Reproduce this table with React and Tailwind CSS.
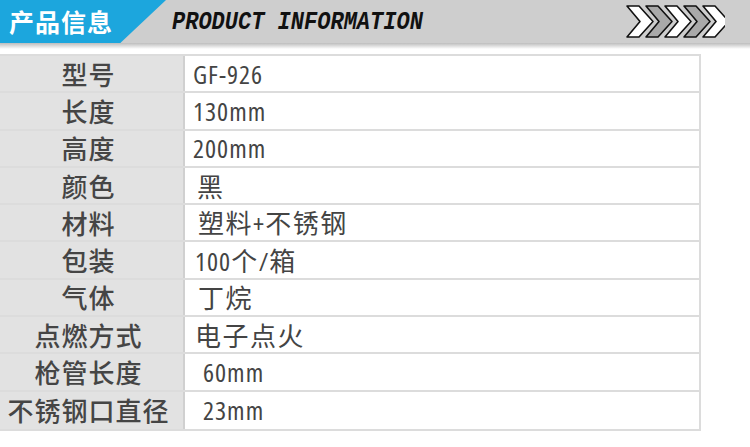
const ROWS = [
  { label: '型号', value: 'GF-926', pad: 'pl-[8px]' },
  { label: '长度', value: '130mm', pad: 'pl-[8px]' },
  { label: '高度', value: '200mm', pad: 'pl-[8px]' },
  { label: '颜色', value: '黑', pad: 'pl-[12px]' },
  { label: '材料', value: '塑料+不锈钢', pad: 'pl-[13px]' },
  { label: '包装', value: '100个/箱', pad: 'pl-[10px]' },
  { label: '气体', value: '丁烷', pad: 'pl-[13px]' },
  { label: '点燃方式', value: '电子点火', pad: 'pl-[10px]' },
  { label: '枪管长度', value: '60mm', pad: 'pl-[18px]' },
  { label: '不锈钢口直径', value: '23mm', pad: 'pl-[18px]' },
]

// latin runs use a condensed face, CJK runs keep the full width
function Value({ text }) {
  const parts = text.split(/([A-Za-z0-9+\-\/]+)/).filter(Boolean)
  return (
    <span>
      {parts.map((p, i) =>
        /[A-Za-z0-9+\-\/]/.test(p) ? (
          <span key={i} className="text-[26px] font-medium [font-stretch:75%] tracking-[1px]"
            style={{ fontFamily: '"Open Sans", "DejaVu Sans", sans-serif' }}>{p}</span>
        ) : (
          <span key={i} className="text-[26px] tracking-[1.5px]">{p}</span>
        )
      )}
    </span>
  )
}

// ── chevron strip in the header ───────────────────────────────────────────────
function Chevrons() {
  const fills = ['#ffffff', '#a9a9a9', '#ffffff', '#a9a9a9', '#ffffff']
  return (
    <svg width="100" height="33" viewBox="0 0 100 33">
      {fills.map((f, i) => {
        const x = 2 + i * 19
        const pts = `${x},1 ${x + 12},1 ${x + 26},16.5 ${x + 12},32 ${x},32 ${x + 13},16.5`
        return (
          <polygon key={i} points={pts} fill={f} stroke="#111" strokeWidth="1.6"
            strokeLinejoin="round" />
        )
      })}
    </svg>
  )
}

export default function App() {
  const cjk = { fontFamily: '"Noto Sans CJK SC", sans-serif' }
  return (
    <div className="w-[750px] h-[447px] bg-white overflow-hidden" style={cjk}>
      {/* header band */}
      <div className="relative h-[43px] bg-[#cecece] flex items-center">
        <div className="h-full w-[166px] bg-[#1ca6dd] [clip-path:polygon(0_0,100%_0,72.5%_100%,0_100%)] flex items-center pl-[9px]">
          <span className="text-white text-[25px] font-bold leading-none tracking-[1px]">产品信息</span>
        </div>
        <span
          className="ml-[6px] text-[22px] italic font-bold text-[#111] leading-none mt-[2px] [transform:scaleY(1.15)]"
          style={{ fontFamily: '"Liberation Mono", monospace' }}>
          PRODUCT INFORMATION
        </span>
        <div className="absolute left-[625px] top-[5px]">
          <Chevrons />
        </div>
      </div>
      <div className="h-[6px] bg-gradient-to-b from-[#bdbdbd] to-white" />

      {/* spec table */}
      <div className="mt-[5px] w-[701px] border-2 border-[#dcdcdc] border-l-0 grid grid-rows-[repeat(10,minmax(0,1fr))] h-[377px]">
        {ROWS.map((r, i) => (
          <div key={r.label}
            className={`grid grid-cols-[185px_1fr] min-h-0 ${i < ROWS.length - 1 ? 'border-b-2 border-[#dcdcdc]' : ''}`}>
            <div className="bg-[#e2e2e2] border-r-2 border-[#d0d0d0] flex items-center justify-center pr-[6px] text-[26px] leading-none font-medium text-[#454545] tracking-[1px]">
              {r.label}
            </div>
            <div className={`flex items-center ${r.pad} leading-none text-[#444]`}>
              <Value text={r.value} />
            </div>
          </div>
        ))}
      </div>
    </div>
  )
}
